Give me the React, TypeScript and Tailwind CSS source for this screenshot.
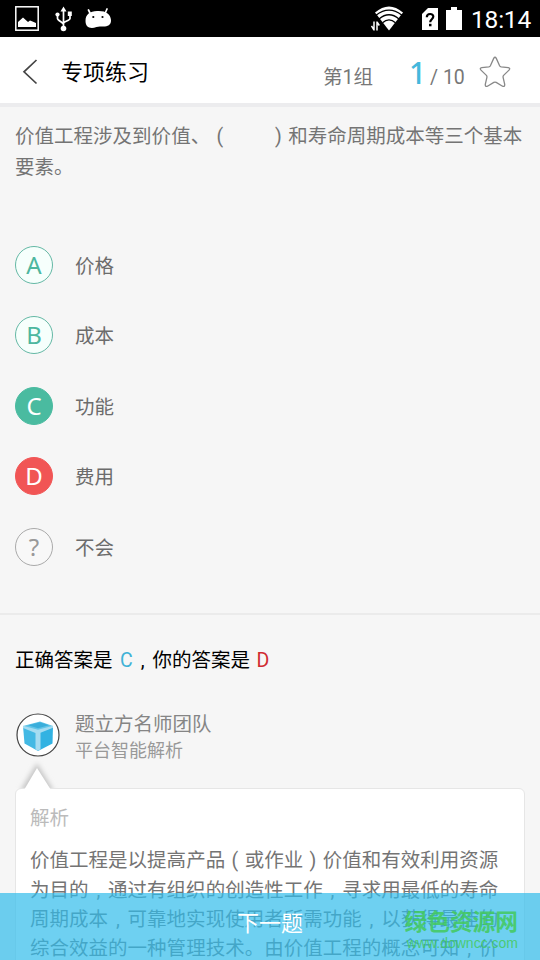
import React from "react";

const CJK = "font-['Roboto','Noto_Sans_CJK_SC',sans-serif]";

// Fullwidth punctuation centred in a one-em cell
function Cell({ children }: { children: React.ReactNode }) {
  return <span className="inline-block w-[1em] text-center">{children}</span>;
}

function Cells({ text }: { text: string }) {
  return (
    <>
      {Array.from(text).map((ch, i) => {
        if (ch === "，") return <Cell key={i}>,</Cell>;
        if (ch === "（") return <Cell key={i}>(</Cell>;
        if (ch === "）") return <Cell key={i}>)</Cell>;
        return <React.Fragment key={i}>{ch}</React.Fragment>;
      })}
    </>
  );
}

function StatusBar() {
  return (
    <div className="flex h-[37px] shrink-0 items-center bg-black text-white">
      <svg className="ml-[15px]" width="24" height="25" viewBox="0 0 24 25">
        <rect x="0.8" y="0.8" width="22.4" height="23.4" fill="none" stroke="#fff" strokeWidth="1.5" />
        <path d="M3 21v-5l5-4.500 5 4.500 2-1.500 2.500 1 3.500 1.500v4z" fill="#fff" />
      </svg>
      <svg className="ml-[16px] mt-[1px]" width="18" height="26" viewBox="0 0 18 26">
        <g stroke="#fff" strokeWidth="1.700" fill="none">
          <path d="M8.500 3v20M2.500 8v4.500c0 2 6 4 6 6M15 9v3.500c0 2-6.500 3-6.500 5" />
        </g>
        <path d="M8.500 0.500l3 5h-6z" fill="#fff" />
        <circle cx="8.500" cy="22.500" r="2.800" fill="#fff" />
        <circle cx="2.500" cy="8.500" r="2.100" fill="#fff" />
        <path d="M12.800 5.500h4v4.500h-4z" fill="#fff" />
      </svg>
      <svg className="ml-[12px]" width="28" height="22" viewBox="0 0 28 22">
        <path d="M3.500 2l2 4M22 1l-2 4.500" stroke="#fff" strokeWidth="1.700" strokeLinecap="round" />
        <path d="M0.500 13C0.500 6 5 3.500 12 3c9-.5 13.500 3 14 9 .3 5-3.500 6.500-7.500 6.500-3 0-4.500-.5-7 .5C5 21.500 0.500 19 0.500 13z" fill="#fff" />
        <circle cx="8.300" cy="9" r="1.100" /><circle cx="17.500" cy="9" r="1.100" />
      </svg>
      <svg className="ml-auto" width="34" height="26" viewBox="0 0 34 26">
        <path d="M4 6.500Q18 -5.500 32 6.500L18 24.500z" fill="#fff" />
        <g stroke="#000" strokeWidth="1.300" fill="none">
          <path d="M5 9.300Q18 -1 31 9.300M8 13Q18 4.500 28 13M11.500 16.800Q18 11 24.500 16.800" />
        </g>
        <path d="M0 14h8.500v12H0z" fill="#000" />
        <path d="M3 15.500v9M0.500 20l2.500 4M6 24.500v-9M8.300 19.500l-2.300-3.500" stroke="#fff" strokeWidth="1.500" fill="none" />
      </svg>
      <svg className="ml-[17px] mt-[1px]" width="16" height="22" viewBox="0 0 16 22">
        <path d="M6 0h10v22H0V6z" fill="#fff" />
        <path d="M4.800 9.300c0-4.300 6.500-4.300 6.500-.7 0 2.700-3.100 2.600-3.100 5.700" stroke="#000" strokeWidth="2.200" fill="none" />
        <path d="M7 15.800h2.500v2.500H7z" />
      </svg>
      <svg className="ml-[8px]" width="16" height="23" viewBox="0 0 16 23">
        <path d="M0 3h5V0h6v3h5v20H0z" fill="#fff" />
      </svg>
      <span className="ml-[9px] mr-[9px] mt-[3px] w-[60px] whitespace-nowrap font-['Roboto',sans-serif] text-[24.5px] leading-none tracking-[-0.2px]">18:14</span>
    </div>
  );
}

function Header() {
  return (
    <header className="flex h-[70px] shrink-0 items-start border-b-[4px] border-[#ececee] bg-white">
      <svg className="ml-[22px] mt-[21px]" width="17" height="28" viewBox="0 0 17 28">
        <path d="M14.500 2L2 13.800 14.500 25.500" stroke="#444" strokeWidth="1.700" fill="none" />
      </svg>
      <h1 className="ml-[22px] mt-[21px] text-[22px] leading-[30px] text-black">专项练习</h1>
      <span className="ml-auto mt-[27px] text-[19.5px] leading-[28px] text-[#777]">第1组</span>
      <span className="ml-[36px] mt-[18px] w-[14px] text-center font-['Noto_Sans',sans-serif] text-[30px] font-medium leading-[36px] text-[#45b8dc]">1</span>
      <span className="ml-[7px] mt-[27px] w-[36px] whitespace-nowrap text-[19.500px] leading-[28px] text-[#777]">/ 10</span>
      <svg className="ml-[13px] mr-[29px] mt-[19px]" width="32" height="32" viewBox="0 0 32 32">
        <path d="M14.700 2.400q1.300-2.300 2.600 0l3.300 7.300q.5 1 1.600 1.200l7 .8q2.500.5.8 2.400l-5.400 5.300q-.7.8-.5 1.900l1.600 7.100q.2 2.700-2.200 1.800l-6.300-3.800q-1.200-.6-2.400 0l-6.300 3.800q-2.400.9-2.200-1.800l1.600-7.100q.2-1.100-.5-1.900L2 14.100q-1.700-1.900.8-2.400l7-.8q1.100-.2 1.600-1.200z" fill="none" stroke="#888" strokeWidth="1.300" />
      </svg>
    </header>
  );
}

const options = [
  { key: "A", label: "价格", style: "border-[#64b8a5] text-[#4db79f] bg-[#f6fffc]" },
  { key: "B", label: "成本", style: "border-[#64b8a5] text-[#4db79f] bg-[#f6fffc]" },
  { key: "C", label: "功能", style: "border-[#4abba0] text-white bg-[#4abba0]" },
  { key: "D", label: "费用", style: "border-[#f15555] text-white bg-[#f15555]" },
  { key: "?", label: "不会", style: "border-[#aaa] text-[#999] bg-[#f8f8f8]" },
];

function CubeAvatar() {
  return (
    <svg className="mt-[2px] shrink-0" width="44" height="44" viewBox="0 0 44 44">
      <circle cx="22" cy="22" r="21" fill="#fff" stroke="#444" strokeWidth="1.200" />
      <path d="M7 13L24 8.500l13 4.500-15 6z" fill="#62c5e8" />
      <path d="M7 13L22 18v20L8.500 30.500z" fill="#43b9e4" />
      <path d="M37 13L22 18v20l14.500-7.500z" fill="#32b2e2" />
      <path d="M7 12.800L22 16.800l15-4v2l-12.500 5v16.500l-2.500 1.500-2.500-1.500V20L7 15z" fill="#a5dcf1" />
      <path d="M12 12.300L24 9.300l9 3-11 3z" fill="#3aaedb" />
    </svg>
  );
}

const analysis = [
  "价值工程是以提高产品（或作业）价值和有效利用资源",
  "为目的，通过有组织的创造性工作，寻求用最低的寿命",
  "周期成本，可靠地实现使用者所需功能，以获得最佳的",
  "综合效益的一种管理技术。由价值工程的概念可知，价",
];

export default function App() {
  return (
    <div lang="zh-CN" className={`relative flex h-[960px] w-[540px] flex-col overflow-hidden bg-[#f6f6f6] ${CJK}`}>
      <StatusBar />
      <Header />
      <main className="flex flex-col">
        <div className="ml-[15px] mt-[14px] whitespace-nowrap text-[19.5px] leading-[31px] text-[#747474]">
          <p><Cells text={"价值工程涉及到价值、（\u3000\u3000）和寿命周期成本等三个基本"} /></p>
          <p>要素。</p>
        </div>

        <ul className="mt-[62.5px] flex flex-col gap-[32.6px] pl-[15px]">
          {options.map((o) => (
            <li key={o.key} className="flex h-[38px] items-center">
              <span className={`flex h-[38px] w-[38px] items-center justify-center rounded-full border-[1.5px] font-['Noto_Sans',sans-serif] text-[24px] leading-none ${o.style}`}>
                {o.key}
              </span>
              <span className="ml-[22px] pt-[4px] text-[19.5px] leading-[28px] text-[#6c6c6c]">{o.label}</span>
            </li>
          ))}
        </ul>

        <div className="mt-[47.5px] h-[2px] bg-[#ebebeb]" />

        <p className="ml-[15px] mt-[31px] flex whitespace-pre text-[19.5px] leading-[30px] text-black">
          <span className="w-[105px]">正确答案是</span>
          <span className="w-[13px] text-[#3fb2d6]">C</span>
          <Cell>,</Cell>
          <span className="w-[104px]">你的答案是</span>
          <span className="text-[#d02b30]">D</span>
        </p>

        <div className="ml-[16px] mt-[35px] flex h-[57px]">
          <CubeAvatar />
          <div className="ml-[15px] flex flex-col">
            <span className="text-[19.5px] leading-[28px] text-[#858585]">题立方名师团队</span>
            <span className="text-[18px] leading-[24px] text-[#999]">平台智能解析</span>
          </div>
        </div>

        <svg className="relative ml-[15px] mt-[-1px] shrink-0 overflow-visible" width="50" height="22" viewBox="0 0 50 22">
          <defs>
            <filter id="soft" x="-50%" y="-50%" width="200%" height="200%"><feGaussianBlur stdDeviation="2.800" /></filter>
            <clipPath id="above"><path d="M-10 -10h70v31h-70z" /></clipPath>
          </defs>
          <g clipPath="url(#above)"><path d="M22 -4L5 24h34z" fill="#c6c6c6" filter="url(#soft)" /></g>
          <path d="M22 1L9 23h27z" fill="#fff" />
        </svg>
        <section className="mx-[15px] mt-[-1px] h-[260px] rounded-[6px] border border-[#e6e6e6] bg-white pl-[14px] pt-[16px]">
          <h2 className="text-[19.5px] leading-[28px] text-[#bbb]">解析</h2>
          <div className="mt-[13px] whitespace-nowrap text-[19.5px] leading-[29.2px] text-[#747474]">
            {analysis.map((line) => (
              <p key={line}><Cells text={line} /></p>
            ))}
          </div>
        </section>
      </main>

      <button className="absolute bottom-0 left-0 flex h-[67px] w-full justify-center bg-[rgba(48,188,235,0.7)] pt-[15px] text-[22px] leading-[32px] text-white">
        下一题
      </button>
      <div className="absolute bottom-[10px] right-[22px] flex flex-col items-end text-[#43c95c]/85">
        <span className="text-[22.7px] font-bold leading-[26px]">绿色资源网</span>
        <span className="font-['Liberation_Sans',sans-serif] text-[14px] leading-[14px]">www.downcc.com</span>
      </div>
    </div>
  );
}
